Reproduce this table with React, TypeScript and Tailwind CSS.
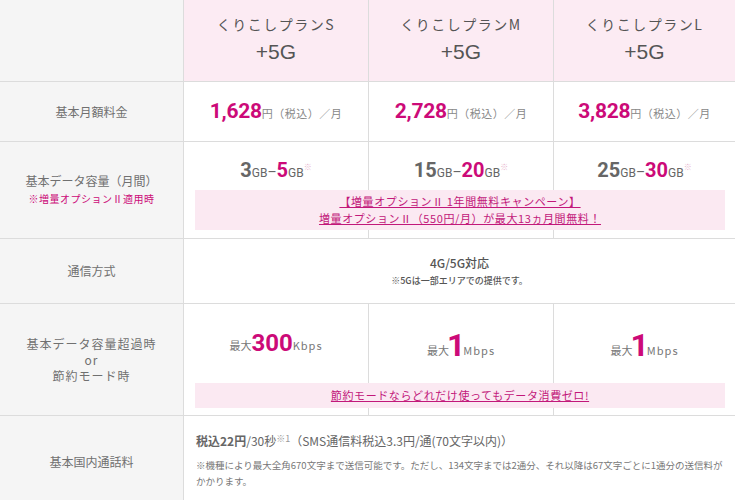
import React from "react";

/* =======================
   DADOS
======================= */
const plans = [
  { name: "くりこしプランS", price: "1,628", min: "3", max: "5", speed: "300", unit: "Kbps" },
  { name: "くりこしプランM", price: "2,728", min: "15", max: "20", speed: "1", unit: "Mbps" },
  { name: "くりこしプランL", price: "3,828", min: "25", max: "30", speed: "1", unit: "Mbps" },
];

const jp = "font-['Noto_Sans_CJK_JP','Noto_Sans',sans-serif]";
const num = "font-['Roboto','Noto_Sans_CJK_JP',sans-serif]";
const grid = "grid grid-cols-[183px_185px_185px_1fr] border-b border-[#dcdcdc]";
const label = "bg-[#f5f5f5] flex flex-col items-center justify-center text-[12px] text-[#707070] leading-[16px]";
const colStart = ["col-start-2", "col-start-3", "col-start-4"];

const App: React.FC = () => {
  return (
    <div className={`w-[735px] h-[500px] overflow-hidden bg-white ${jp}`}>
      {/* Header */}
      <div className={`${grid} h-[82px]`}>
        <div className="bg-[#f5f5f5]" />
        {plans.map((p) => (
          <div
            key={p.name}
            className="bg-[#fcebf3] border-l border-[#dcdcdc] flex flex-col items-center pt-[14px] text-[#555]"
          >
            <span className="text-[14px] tracking-[1.5px] leading-[20px]">{p.name}</span>
            <span className="font-['Liberation_Sans',sans-serif] text-[21px] leading-[30px] mt-[3px]">+5G</span>
          </div>
        ))}
      </div>

      {/* Preço */}
      <div className={`${grid} h-[60px]`}>
        <div className={`${label} text-[11px]`}>基本月額料金</div>
        {plans.map((p) => (
          <div key={p.name} className="border-l border-[#dcdcdc] flex items-center justify-center">
            <span className={`${num} text-[21px] font-bold text-[#cc0a78] tracking-[-0.3px]`}>{p.price}</span>
            <span className="text-[11px] text-[#888] mt-[4px] tracking-[0.5px]">円（税込）／月</span>
          </div>
        ))}
      </div>

      {/* Dados */}
      <div className={`${grid} h-[97px] grid-rows-[1fr_auto]`}>
        <div className={`${label} row-span-2`}>
          <span>基本データ容量（月間）</span>
          <span className="text-[10px] text-[#cc0a78] mt-[2px] tracking-[0.5px]">※増量オプションⅡ適用時</span>
        </div>
        {plans.map((p, i) => (
          <div
            key={p.name}
            className={`border-l border-[#dcdcdc] row-span-2 row-start-1 flex justify-center pt-[16px] ${colStart[i]}`}
          >
            <span className={`${num} text-[#666] leading-[24px]`}>
              <span className="text-[20px] font-bold">{p.min}</span>
              <span className="text-[12px]">GB</span>
              <span className="text-[14px]">–</span>
              <span className="text-[20px] font-bold text-[#cc0a78]">{p.max}</span>
              <span className="text-[12px]">GB</span>
              <span className="relative -top-[7px] text-[8px] text-[#e7b3cc]">※</span>
            </span>
          </div>
        ))}
        <div className="col-start-2 col-span-3 row-start-2 z-10 bg-[#fbe9f2] ml-[12px] mr-[10px] mb-[8px] h-[40px] flex flex-col items-center justify-center text-[11px] leading-[17px] text-[#c2187a] underline tracking-[0.6px]">
          <span>【増量オプションⅡ 1年間無料キャンペーン】</span>
          <span>増量オプションⅡ（550円/月）が最大13ヵ月間無料！</span>
        </div>
      </div>

      {/* Comunicação */}
      <div className={`${grid} h-[65px]`}>
        <div className={label}>通信方式</div>
        <div className="col-span-3 border-l border-[#dcdcdc] flex flex-col items-center justify-center text-[#555]">
          <span className="text-[12px] font-medium leading-[18px]">4G/5G対応</span>
          <span className="text-[9px] font-medium leading-[16px] mt-[1px]">※5Gは一部エリアでの提供です。</span>
        </div>
      </div>

      {/* Velocidade */}
      <div className={`${grid} h-[112px] grid-rows-[1fr_auto]`}>
        <div className={`${label} row-span-2 tracking-[1px]`}>
          <span>基本データ容量超過時</span>
          <span>or</span>
          <span>節約モード時</span>
        </div>
        {plans.map((p, i) => (
          <div
            key={p.name}
            className={`border-l border-[#dcdcdc] row-span-2 row-start-1 flex justify-center items-start pt-[24px] ${colStart[i]}`}
          >
            <div className="flex items-end">
              <span className="text-[11px] text-[#777] mb-[5px]">最大</span>
              <span
                className={`${num} font-bold text-[#cc0a78] ${
                  p.speed === "1" ? "text-[32px] leading-[35px] -mx-[2px]" : "text-[24px] leading-[30px]"
                }`}
              >
                {p.speed}
              </span>
              <span className="text-[11px] text-[#777] mb-[5px] tracking-[1px]">{p.unit}</span>
            </div>
          </div>
        ))}
        <div className="col-start-2 col-span-3 row-start-2 z-10 bg-[#fbe9f2] ml-[12px] mr-[10px] mb-[7px] h-[25px] flex items-center justify-center text-[11px] text-[#c2187a] underline tracking-[0.6px]">
          節約モードならどれだけ使ってもデータ消費ゼロ!
        </div>
      </div>

      {/* Chamadas */}
      <div className="grid grid-cols-[183px_1fr] h-[100px]">
        <div className={`${label} justify-start pt-[38px]`}>基本国内通話料</div>
        <div className="border-l border-[#dcdcdc] px-[12px] pt-[16px] text-[#666]">
          <p className="text-[12px] leading-[18px]">
            <span className="font-bold">税込22円</span>/30秒<sup className="text-[9px] text-[#999]">※1</sup>（SMS通信料税込3.3円/通(70文字以内)）
          </p>
          <p className="text-[9.5px] leading-[16px] mt-[7px] text-[#777]">
            ※機種により最大全角670文字まで送信可能です。ただし、134文字までは2通分、それ以降は67文字ごとに1通分の送信料がかかります。
          </p>
        </div>
      </div>
    </div>
  );
};

export default App;
